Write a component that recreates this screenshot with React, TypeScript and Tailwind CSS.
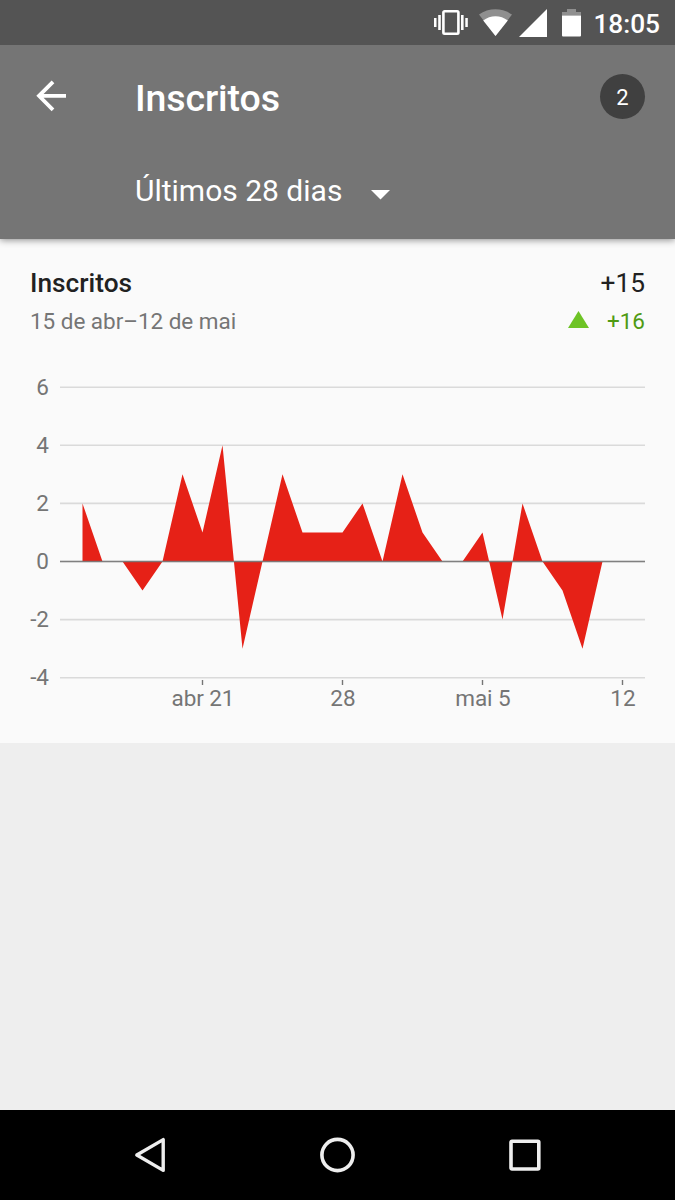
const VALUES = [
  2, 0, 0, -1, 0, 3, 1, 4, -3, 0, 3, 1, 1, 1, 2, 0, 3, 1, 0, 0, 1, -2, 2, 0, -1, -3, 0,
];

const Y_TICKS = [6, 4, 2, 0, -2, -4];

const X_TICKS = [
  { day: 6, label: "abr 21" },
  { day: 13, label: "28" },
  { day: 20, label: "mai 5" },
  { day: 27, label: "12" },
];

const dayX = (day: number) => 52.5 + day * 20;
const valueY = (value: number) => 191.5 - value * 29.05;

function StatusBar() {
  return (
    <div className="z-20 flex h-[45px] shrink-0 items-center justify-end bg-[#545454] pr-[15px] text-white">
      <svg className="mr-[10px] h-[27px] w-[36px]" viewBox="0 0 36 27" fill="currentColor">
        <path d="M1 9h2.5v9H1zM5.2 6h2.6v15H5.2zM28 6h2.6v15H28zM32.3 9h2.5v9h-2.5z" />
        <rect x="10.4" y="2.2" width="15" height="22.6" rx="1.2" fill="none" stroke="currentColor" strokeWidth="2.6" />
      </svg>
      <svg className="mr-[7px] h-[27px] w-[33px]" viewBox="0 0 33 27" fill="currentColor">
        <path d="M0 5.6C9.5-1.5 23.5-1.5 33 5.6L16.5 27z" opacity="0.35" />
        <path d="M4.2 11.6C11.4 5.9 21.6 5.9 28.8 11.6L16.5 27z" />
      </svg>
      <svg className="mr-[15px] h-[28px] w-[28px]" viewBox="0 0 28 28" fill="currentColor">
        <path d="M28 0v28H0z" />
      </svg>
      <svg className="mr-[12px] h-[28px] w-[19px]" viewBox="0 0 19 28" fill="currentColor">
        <path d="M5 0h9v3h5v3.5H0V3h5z" opacity="0.35" />
        <path d="M0 6.5h19v20a1 1 0 0 1-1 1H1a1 1 0 0 1-1-1z" />
      </svg>
      <span className="pt-[3px] text-[26.25px] leading-none font-medium">18:05</span>
    </div>
  );
}

function AppBar() {
  return (
    <header className="z-10 h-[194px] shrink-0 bg-[#757575] px-[30px] text-white shadow-[0_1px_7px_rgba(0,0,0,0.45)]">
      <div className="flex h-[103px] items-center">
        <svg className="mr-[69px] mb-[2px] h-[32px] w-[36px]" viewBox="0 0 36 32" fill="none" stroke="currentColor" strokeWidth="3.8">
          <path d="M37 15.8H9M23 1.8l-14 14 14 14" />
        </svg>
        <h1 className="pt-1 text-[37.5px] leading-none font-medium tracking-[-0.1px]">Inscritos</h1>
        <span className="ml-auto flex size-[45px] items-center justify-center rounded-full bg-[#404040] pt-[2px] text-[22px]">
          2
        </span>
      </div>
      <div className="flex h-[86px] items-center pl-[105px]">
        <span className="text-[30px] leading-none">Últimos 28 dias</span>
        <svg className="mt-2 ml-[29px] h-[10px] w-[19px]" viewBox="0 0 19 10" fill="currentColor">
          <path d="M0 0h19l-9.5 9.6z" />
        </svg>
      </div>
    </header>
  );
}

function AreaChart() {
  const points = VALUES.map((value, day) => `${dayX(day)},${valueY(value)}`).join(" ");

  return (
    <svg className="h-[350px] w-[615px]" viewBox="0 0 615 350" fontSize="22.5">
      {Y_TICKS.map((tick) => (
        <g key={tick}>
          <line x1="30" x2="615" y1={valueY(tick)} y2={valueY(tick)} stroke="#dadada" strokeWidth="1.6" />
          <text x="19" y={valueY(tick) + 7.5} textAnchor="end" fill="#757575">
            {tick}
          </text>
        </g>
      ))}
      <polygon points={`${dayX(0)},${valueY(0)} ${points}`} fill="#e62117" />
      <line x1="30" x2="615" y1={valueY(0)} y2={valueY(0)} stroke="#757575" strokeOpacity="0.9" strokeWidth="1.4" />
      {X_TICKS.map(({ day, label }) => (
        <g key={label}>
          <line x1={dayX(day)} x2={dayX(day)} y1="310" y2="315" stroke="#757575" strokeWidth="1.4" />
          <text x={dayX(day) + 0.4} y="336" textAnchor="middle" fill="#757575" letterSpacing="-0.1">
            {label}
          </text>
        </g>
      ))}
    </svg>
  );
}

export default function App() {
  return (
    <div className="flex h-[1200px] w-[675px] flex-col overflow-hidden bg-[#eeeeee] font-['Roboto',sans-serif]">
      <StatusBar />
      <AppBar />

      <section className="h-[504px] shrink-0 bg-[#fafafa] px-[30px] pt-[26px]">
        <div className="flex h-[38px] items-center justify-between text-[26.25px] text-[#212121]">
          <h2 className="font-medium">Inscritos</h2>
          <span>+15</span>
        </div>
        <div className="flex h-[38px] items-center text-[22.5px] text-[#757575]">
          <span className="tracking-[-0.04px]">15 de abr–12 de mai</span>
          <svg className="mr-[18px] mb-[5px] ml-auto h-[17px] w-[21px]" viewBox="0 0 21 17" fill="#6dc325">
            <path d="M10.5 0L21 17H0z" />
          </svg>
          <span className="text-[#4f9a12]">+16</span>
        </div>
        <div className="mt-[29px]">
          <AreaChart />
        </div>
      </section>

      {/* System navigation */}
      <nav className="mt-auto flex h-[90px] shrink-0 items-center justify-center gap-[151px] bg-black text-[#eeeeee]">
        <svg className="h-9 w-9" viewBox="0 0 36 36" fill="none" stroke="currentColor" strokeWidth="3.4" strokeLinejoin="round">
          <path d="M30.2 2.6v30.8L3.8 18z" />
        </svg>
        <svg className="h-9 w-9" viewBox="0 0 36 36" fill="none" stroke="currentColor" strokeWidth="3.6">
          <circle cx="17.5" cy="18" r="15.6" />
        </svg>
        <svg className="h-9 w-9" viewBox="0 0 36 36" fill="none" stroke="currentColor" strokeWidth="3.6">
          <rect x="4" y="4.2" width="27.8" height="27.8" rx="1" />
        </svg>
      </nav>
    </div>
  );
}
